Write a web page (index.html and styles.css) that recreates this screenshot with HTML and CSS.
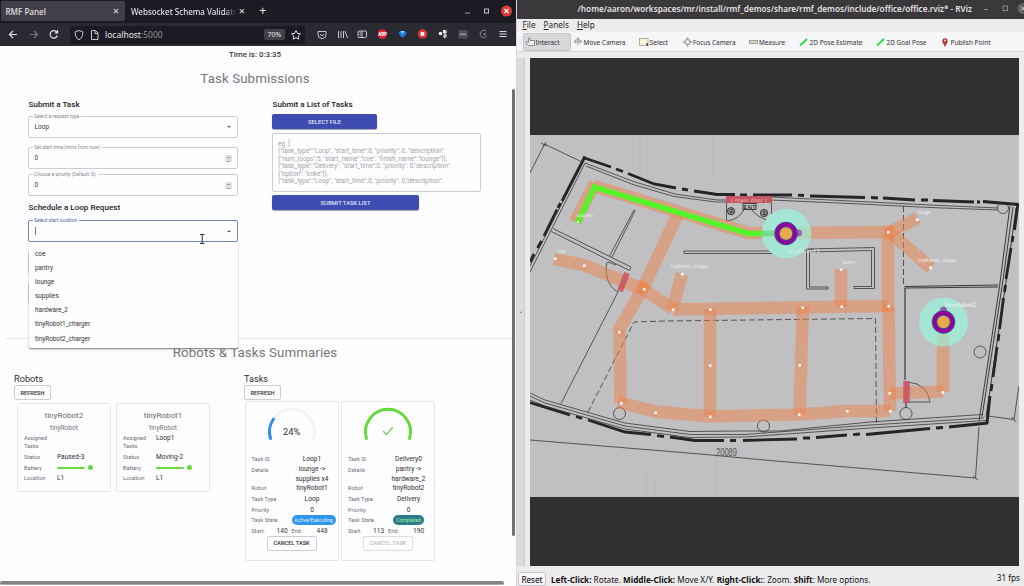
FILE: index.html
```html
<!DOCTYPE html>
<html lang="en">
<head>
<meta charset="utf-8">
<title>RMF Panel</title>
<link rel="stylesheet" href="styles.css">
</head>
<body>
<div class="desktop">
<section class="browser">
  <div class="tabs">
    <div class="tab active"><span>RMF Panel</span><i>×</i></div>
    <div class="tab second"><span class="fade">Websocket Schema Validato</span><i>×</i></div>
    <div class="plus">+</div>
    <svg class="winbtns" width="60" height="22" viewBox="0 0 60 22"><path d="M9 13h5" stroke="#aaa8ae"/><rect x="28.500" y="9" width="4" height="4" fill="none" stroke="#c5c3c8"/><circle cx="50.500" cy="11" r="5.500" fill="#e23b36"/><path d="M48.500 9l4 4m0-4l-4 4" stroke="#fff" stroke-width="1.100"/></svg>
  </div>
  <div class="toolbar">
    <svg class="nav" width="70" height="23" viewBox="0 0 70 23" fill="none" stroke-width="1.200"><path d="M17 11.500H9.500m3.500-3.500L9.500 11.500 13 15" stroke="#e4e2e8"/><path d="M30 11.500h7.500M34 8l3.500 3.500L34 15" stroke="#77757d"/><path d="M57 9.500a3.700 3.700 0 1 0 .3 3M57.500 7v3h-3" stroke="#e4e2e8"/></svg>
    <div class="url">
      <svg width="32" height="18" viewBox="0 0 32 18" fill="none" stroke="#cbc9cf"><path d="M9 4.500l3.800 1.300c.3 3.500-1 6.500-3.800 8-2.800-1.500-4.100-4.500-3.800-8z"/><path d="M21.500 4.500h4l2.500 2.500v6.500h-6.500zM25 4.500v3h3"/></svg>
      <span class="host">localhost</span><span class="port">:5000</span>
      <span class="zoom">70%</span>
      <svg width="14" height="14" viewBox="0 0 14 14" fill="none" stroke="#e4e2e8"><path d="M7 2.500l1.400 2.900 3.100.4-2.300 2.200.6 3.200L7 9.700l-2.800 1.500.6-3.200-2.300-2.200 3.100-.4z"/></svg>
    </div>
    <svg class="exts" width="211" height="23" viewBox="305 23 211 23" fill="none" stroke="#c9c7cd">
      <path d="M318 31.500h8v3a4 4 0 0 1-8 0zM320 34l2 2 2-2"/>
      <path d="M338.500 31v7M341 31v7M343.500 31v7M345 31l2.500 7"/>
      <rect x="358" y="31" width="8.500" height="6.500" rx="1"/><path d="M362 31v6.500M359.500 33h1.500m-1.500 2h1.500"/>
      <path d="M380 29.500h4.500l2 2.200v4.800l-2 2.200H380l-2-2.200v-4.800z" fill="#dd2530" stroke="none"/>
      <text x="378.200" y="36" font-size="4.500" class="abp">ABP</text>
      <path d="M400 31h5l2 2.500-4.500 4.500-4-4.500z" fill="#1c7fe0" stroke="none"/><path d="M401 31h3l-1.500 3z" fill="#b9e0ff" stroke="none"/>
      <circle cx="422.500" cy="34" r="4.700" fill="#dc3437" stroke="none"/><rect x="420.700" y="32.200" width="3.600" height="3.600" fill="#fff" stroke="none"/>
      <circle cx="440.500" cy="33.500" r="1.800" fill="#eee" stroke="none"/><path d="M443 30q4-1 4 2l-1 2 1 2q-1 2.500-3 2.500l-1-2.500 1-2z" fill="#bbb" stroke="none"/><path d="M443 30h2v3h-2z" fill="#fff" stroke="none"/>
      <rect x="458.500" y="30" width="9" height="8.500" fill="#504e58" stroke="none"/><path d="M460 34.200h6" stroke="#ddd" stroke-dasharray="1.500 .7"/>
      <path d="M486 31a3.700 3.700 0 1 0 0 6M486 33l-2.500 1.200 3 1.500" stroke="#8a8890"/>
      <path d="M499.500 31.500h7m-7 2.500h7m-7 2.500h7" stroke="#dddbe0"/>
    </svg>
  </div>
  <div class="page">
    <p class="time">Time is: 0:3:35</p>
    <h1>Task Submissions</h1>
    <div class="forms">
      <div class="col">
        <h2>Submit a Task</h2>
        <div class="field"><label>Select a request type</label><span>Loop</span><b class="caret"></b></div>
        <div class="field f2"><label>Set start time (mins from now)</label><span>0</span><b class="spin"></b></div>
        <div class="field f3"><label>Choose a priority (Default: 0)</label><span>0</span><b class="spin"></b></div>
        <h2 class="loop">Schedule a Loop Request</h2>
        <div class="field focus"><label>Select start location</label><span class="ins"></span><b class="caret up"></b>
          <svg class="ibeam" width="8" height="12" viewBox="0 0 8 12"><path d="M2 1.500h4.500M4.200 1.500v9M2 10.500h4.500" stroke="#333" fill="none"/></svg>
          <ul class="menu"><li>coe</li><li>pantry</li><li>lounge</li><li>supplies</li><li>hardware_2</li><li>tinyRobot1_charger</li><li>tinyRobot2_charger</li></ul>
        </div>
        <div class="field f5"></div>
        <div class="field f6"></div>
      </div>
      <div class="col right">
        <h2>Submit a List of Tasks</h2>
        <div class="btn blue sel">SELECT FILE</div>
        <div class="area">eg. [<br>{"task_type":"Loop", "start_time":0, "priority": 0, "description":<br>{"num_loops":5, "start_name":"coe", "finish_name":"lounge"}},<br>{"task_type":"Delivery", "start_time":0, "priority": 0,"description":<br>{"option": "coke"}},<br>{"task_type":"Loop", "start_time":0, "priority": 0,"description":</div>
        <div class="btn blue sub">SUBMIT TASK LIST</div>
      </div>
    </div>
    <h1 class="summary">Robots &amp; Tasks Summaries</h1>
    <div class="lists">
      <div class="robots">
        <h3>Robots</h3><div class="btn out">REFRESH</div>
        <div class="cards">
          <div class="card robot"><h4>tinyRobot2</h4><h5>tinyRobot</h5>
            <dl><dt>Assigned<br>Tasks</dt><dd></dd><dt>Status</dt><dd>Paused-3</dd><dt>Battery</dt><dd><em></em></dd><dt>Location</dt><dd>L1</dd></dl></div>
          <div class="card robot"><h4>tinyRobot1</h4><h5>tinyRobot</h5>
            <dl><dt>Assigned<br>Tasks</dt><dd>Loop1</dd><dt>Status</dt><dd>Moving-2</dd><dt>Battery</dt><dd><em></em></dd><dt>Location</dt><dd>L1</dd></dl></div>
        </div>
      </div>
      <div class="tasks">
        <h3>Tasks</h3><div class="btn out">REFRESH</div>
        <div class="cards">
          <div class="card task">
            <svg class="gauge" width="92" height="51" viewBox="0 0 92 51" fill="none" stroke-width="3" stroke-linecap="round"><path d="M24.500 35.500A22.500 22.500 0 1 1 67.500 35.500" stroke="#f3f2f5"/><path d="M24.500 35.500A22.500 22.500 0 0 1 27.500 16" stroke="#3091e6"/><text x="45.700" y="32" text-anchor="middle" class="pct">24%</text></svg>
            <dl><dt>Task ID</dt><dd>Loop1</dd><dt>Details</dt><dd class="two">lounge -&gt;<br>supplies x4</dd><dt>Robot</dt><dd>tinyRobot1</dd><dt>Task Type</dt><dd>Loop</dd><dt>Priority</dt><dd>0</dd><dt>Task State</dt><dd><span class="pill">Active/Executing</span></dd></dl>
            <div class="times"><i>Start:</i><b>140</b><i>End:</i><b>448</b></div>
            <div class="btn out cancel">CANCEL TASK</div>
          </div>
          <div class="card task">
            <svg class="gauge" width="92" height="51" viewBox="0 0 92 51" fill="none" stroke-width="3" stroke-linecap="round"><path d="M24.500 35.500A22.500 22.500 0 1 1 67.500 35.500" stroke="#67d93a"/><path d="M41.500 28.500l3 3 6-7" stroke="#7cc85a" stroke-width="1.300"/></svg>
            <dl><dt>Task ID</dt><dd>Delivery0</dd><dt>Details</dt><dd class="two">pantry -&gt;<br>hardware_2</dd><dt>Robot</dt><dd>tinyRobot2</dd><dt>Task Type</dt><dd>Delivery</dd><dt>Priority</dt><dd>0</dd><dt>Task State</dt><dd><span class="pill done">Completed</span></dd></dl>
            <div class="times"><i>Start:</i><b>113</b><i>End:</i><b>190</b></div>
            <div class="btn out cancel off">CANCEL TASK</div>
          </div>
        </div>
      </div>
    </div>
    <div class="vbar"></div>
    <div class="hbar"></div>
  </div>
</section>
<section class="rviz">
  <div class="titlebar"><span>/home/aaron/workspaces/mr/install/rmf_demos/share/rmf_demos/include/office/office.rviz* - RViz</span>
    <svg width="45" height="19" viewBox="0 0 45 19"><path d="M5 9.500h4" stroke="#8d8a8e"/><rect x="24" y="6" width="4.500" height="4.500" fill="none" stroke="#8d8a8e"/><circle cx="44" cy="8.500" r="5.500" fill="#626063"/><path d="M42 6.500l4 4m0-4l-4 4" stroke="#ddd"/></svg></div>
  <div class="menubar"><span><u>F</u>ile</span><span><u>P</u>anels</span><span><u>H</u>elp</span></div>
  <div class="tools">
    <svg width="508" height="33" viewBox="516 19 508 33">
      <rect x="523.500" y="33.500" width="47" height="17" rx="1" fill="#d9d7d9" stroke="#c7c5c7"/>
      <path d="M519 37v10M521 37v10" stroke="#dcdadc" stroke-dasharray="1 1"/>
      <path d="M528.500 45.500l-3-3 1.500-1 1.500 1V38h1.500v2.500h4.500v5z" fill="#eee" stroke="#777" stroke-width=".8"/>
      <path d="M578 38v7M574.500 41.500h7M576.500 39.500l1.500-1.500 1.500 1.500M576 40l-1.500 1.500 1.500 1.500M580 40l1.500 1.500-1.500 1.500" stroke="#aaa" stroke-width="1.300" fill="none"/>
      <rect x="639.500" y="38.500" width="8.500" height="7" fill="#f5f4de" stroke="#b2b09b"/><path d="M646.500 43.500l1.500 1.800" stroke="#222" stroke-width="1.500"/>
      <g fill="none" stroke="#aaa"><circle cx="687.500" cy="42" r="2.500" stroke-width="1.500"/><path d="M682.500 42h3m4 0h3m-5-5v3m0 4v3" stroke-width="1.500"/></g>
      <rect x="749.500" y="40.500" width="8" height="3" fill="#dcd9cc" stroke="#8b8982" stroke-width=".8"/>
      <path d="M800 45.500l7-6.500M877 45.500l7-6.500" stroke="#37d64d" stroke-width="2"/>
      <path d="M945 47l-2.600-5a2.800 2.800 0 1 1 5.200 0z" fill="#b23a2f"/><circle cx="945" cy="40.500" r="1" fill="#eee"/>
      <g class="tooltext"><text x="535.500" y="45" textLength="24" lengthAdjust="spacingAndGlyphs">Interact</text><text x="583.500" y="45" textLength="42" lengthAdjust="spacingAndGlyphs">Move Camera</text><text x="649.500" y="45" textLength="18.500" lengthAdjust="spacingAndGlyphs">Select</text><text x="693" y="45" textLength="42.500" lengthAdjust="spacingAndGlyphs">Focus Camera</text><text x="759" y="45" textLength="26" lengthAdjust="spacingAndGlyphs">Measure</text><text x="809.500" y="45" textLength="53" lengthAdjust="spacingAndGlyphs">2D Pose Estimate</text><text x="886.500" y="45" textLength="40" lengthAdjust="spacingAndGlyphs">2D Goal Pose</text><text x="950.500" y="45" textLength="40" lengthAdjust="spacingAndGlyphs">Publish Point</text></g>
    </svg>
  </div>
  <div class="view">
    <div class="side">●</div>
    <svg class="map" width="489" height="508" viewBox="530 58 489 508" fill="none">
      <rect x="530" y="58" width="490" height="508" fill="#312f32"/>
      <rect x="530" y="135" width="490" height="362" fill="#c0bfc1"/>
      <g stroke="#b8b7b9" stroke-width="1.500" opacity=".6"><path d="M640 136v45M713 136v40M646 470v26M655 480v16M716 455v41"/></g>
      <g stroke="#39383a" stroke-width=".8">
        <path d="M530 173L544.500 144 582 162M530 440L700 454 770 460.500 975 478M979 427L975.500 478M988 416L1014 419.500 1019 386" />
        <path d="M541 143l6 3M543 147l3-5M973 476l5 4M1012 417l4 5"/>
        <path d="M530 272L585 163 635 182 675 194 717 200H726M530 266L583.500 161M586 166L633 184.500 674 196.500 716 202H726"/>
        <path d="M771 197L850 201 930 205 998 208M771 200L850 203.500 930 207.500 998 210"/>
        <path d="M1010 206L999 290 979 421M1013 207L1003 280 982 417M1016 208L1006 282 986 417" stroke-width="1"/>
        <path d="M530 393L545 400 625 423 690 431.500 740 431 780 431 870 422 982 414.500M530 396L545 403 625 426 690 434.500 745 434.500 870 425 984 418M530 400L545 406 625 429 690 437.500 745 437 870 428 986 420.500"/>
        <path d="M551.500 231.500l78 39 1.500-3.500-78-38.500M609.500 256l24.500-46M612 257l23-46M634 209.500l1.500 1.500M607 262c-3 11 1 25 11 30M608 262l8 3M618.500 291L561 403.500"/>
        <path d="M684 251h100M684 253.500h100M684 251v2.500M795 252l19-3"/>
        <path d="M806.500 249L874.500 247.500V288.500H854V286.500H871.500V250.500L809.500 252V287H828V289H806.500Z"/>
        <path d="M904.500 286.500L998 285M904.500 288L998 287M905 288v92M906 402v6" stroke-width="1.200"/>
        <path d="M903.500 206v78M588 412L634 322 665 321 875.500 318.500 876.500 424" stroke-dasharray="6 3"/>
        <circle cx="1003" cy="208" r="5.500"/><circle cx="980" cy="352" r="6"/><circle cx="619.500" cy="413.500" r="6"/><circle cx="763.500" cy="426" r="6"/><circle cx="906" cy="413.500" r="6"/>
        <path d="M908 382q20 2 22 20h-21M726.500 203v18q13-1 19-14M771.500 203v18q-14-2-22-14"/>
      </g>
      <g stroke="#252426" stroke-width="2.800">
        <path d="M585 156.500L562 201M560.500 203l-2.500 5M557 209.500L544 236M541.500 241l-4 7M534 254l-4 8"/>
        <path d="M583 157.500l28 9.500M616 169l7 2.500M628 173.500L654 184l22 4M682 189l6 1M694 191l23 3.500h18M740 195h7M753 195h39M798 195.200l6 .3M810 196l55 1.500M871 197.500l7 .5M883 198l32 2M921 200h7M933 200.500l41 1.500M977 202h3M983 201.500l35 3"/>
        <path d="M1018 203l-3.500 27M1013 236l-1 6M1011 248l-5 31M1005.500 285l-1 7M1003.500 298l-4 31M999 334l-1 7M997 347l-4 30M992 384l-1 7M990 396l-3 27.500"/>
        <path d="M988 423l-39 4M943 427.500l-7 .5M930 428.500l-64 6M860 434l-7 .7M847 435l-31 2.500M810 438h-7M797 439l-54 1.500M736 440.500h-6M724 440.500h-29l-25-3.500M664 436.500l-7-.8M651 434.500l-26-2.500-37-12M582 418.500l-6-2M570 415l-40-12.500"/>
      </g>
      <g class="lanes">
        <path d="M575 222L595 183"/><path d="M594 186L748 233 786 233"/><path d="M786 233L894 232"/><path d="M886 234L918 218"/><path d="M886 229L931 268"/><path d="M888 236V312"/><path d="M888.500 306L890 411"/><path d="M673 309.500L888 306"/><path d="M841 269V307"/><path d="M672 310L682 274"/><path d="M554 259L584 265 645 290"/><path d="M640 287L673 309"/><path d="M678 214L642 290"/><path d="M646 283L617 333"/><path d="M619.500 331L620.500 403"/><path d="M618 402L655 411.500 710 416.500 800 414.500 847 411H890"/><path d="M710 309V417"/><path d="M803 306L799.500 415"/><path d="M890 393.500L943 391.500"/><path d="M943 322V392"/>
      </g>
      <path d="M577.500 223L594.500 187 748 233.500H764" stroke="#54f428" stroke-width="5.500"/>
      <g fill="#fff"><path d="M577 221h2v2h-2zM554 257.500h2.500v2.500H554zM583 264.500h2.500v2.500H583zM643 288h2.500v2.500H643zM672 308.500h2.500v2.500H672zM681 273h2.500v2.500H681zM709 308.500h2.500v2.500H709zM709 364.500h2.500v2.500H709zM709 415.500h2.500v2.500H709zM618 331h2.500v2.500H618zM620 402h2.500v2.500H620zM654.500 411.500h2.500v2.500h-2.500zM801.500 306.500h2.500v2.500h-2.500zM798.500 364h2.500v2.500h-2.500zM798 413.500h2.500v2.500H798zM846 410h2.500v2.500H846zM889 410h2.500v2.500H889zM888.500 392h2.500v2.500h-2.500zM941.500 391h2.500v2.500h-2.500zM840 268.500h2.500v2.500H840zM840.500 305.500h2.500v2.500h-2.500zM887.500 305h2.500v2.500h-2.500zM887 231h2.500v2.500H887zM916 218.500h2.500v2.500H916zM929.500 266.500h2.500v2.500h-2.500z"/></g>
      <path d="M627 273l-7 18" stroke="#c85462" stroke-width="6" opacity=".9"/><path d="M906.500 381v22" stroke="#c85462" stroke-width="6.500" opacity=".9"/>
      <rect x="726" y="196" width="46" height="7" fill="#c95462"/>
      <g stroke="#39383a"><circle cx="731" cy="211.200" r="3.600" fill="#8a898b"/><circle cx="764" cy="213" r="3.600" fill="#8a898b"/><rect x="743" y="203.500" width="13" height="6"/></g>
      <g class="labels"><text x="731" y="201.500" fill="#e9c9b8" textLength="36">/ main door /</text><text x="743.500" y="208.800" class="dark" textLength="12">EXIT</text><text x="729.400" y="213.200" class="dark">2</text><text x="762.500" y="215" class="dark">1</text>
      <text x="577" y="217" textLength="16" lengthAdjust="spacingAndGlyphs">supplies</text><text x="558" y="253" textLength="8">coe</text><text x="670" y="268" textLength="38" lengthAdjust="spacingAndGlyphs">tinyRobot1_charger</text><text x="917.500" y="214" textLength="13" lengthAdjust="spacingAndGlyphs">lounge</text><text x="842" y="263.500" textLength="13" lengthAdjust="spacingAndGlyphs">pantry</text><text x="918" y="261.500" textLength="39" lengthAdjust="spacingAndGlyphs">tinyRobot2_charger</text></g>
      <g stroke="none"><circle cx="786.500" cy="233.500" r="24.700" fill="#a4e5d4"/><circle cx="943.500" cy="322" r="24.500" fill="#a4e5d4"/></g>
      <path d="M762 233.500h13" stroke="#79da94" stroke-width="6"/><path d="M799 233.500h12M943 334v12" stroke="#b1d7ba" stroke-width="12"/>
      <circle cx="798.500" cy="233" r="3.500" fill="#9662b8"/><circle cx="943.500" cy="310" r="3.500" fill="#9662b8"/>
      <g fill="#eaaa4c" stroke="#424f93" stroke-width="5.500"><circle cx="786" cy="233.500" r="9"/><circle cx="943.500" cy="322" r="9"/></g><g stroke="#95009c" stroke-width="3.400"><circle cx="786" cy="233.500" r="9"/><circle cx="943.500" cy="322" r="9"/></g>
      <g class="labels big"><text x="787" y="252.500" textLength="33" opacity=".65">tinyRobot1</text><text x="945" y="306.500" textLength="32">tinyRobot2</text></g>
      <text x="716" y="456" class="dim" textLength="21" lengthAdjust="spacingAndGlyphs">20089</text>
    </svg>
  </div>
  <div class="status"><button>Reset</button><span class="hint"><b>Left-Click:</b> Rotate. <b>Middle-Click:</b> Move X/Y. <b>Right-Click:</b>: Zoom. <b>Shift</b>: More options.</span><span class="fps">31 fps</span></div>
</section>
</div>
</body>
</html>
```
FILE: styles.css
```css
* { box-sizing: border-box; margin: 0; padding: 0; }
body { width: 1024px; height: 586px; overflow: hidden; background: #fff; }
svg { display: block; flex: none; }
i { font-style: normal; }
.desktop { display: flex; width: 1024px; height: 586px; }
.browser { width: 516px; height: 586px; display: flex; flex-direction: column; background: #fefdff; font-family: Roboto, sans-serif; overflow: hidden; }

/* browser chrome */
.tabs { height: 23px; background: #1c1a22; display: flex; align-items: flex-start; font: 500 8.1px "Noto Sans", sans-serif; color: #e2e0e6; }
.tab { height: 20px; margin-top: 1px; display: flex; align-items: center; justify-content: space-between; white-space: nowrap; }
.tab.active { width: 124px; margin-left: 1px; padding: 0 6px 0 4.5px; background: #423f48; border-radius: 2px; }
.tab.second { width: 114px; margin-left: 6px; }
.tab i { font-size: 11px; font-weight: 400; line-height: 18px; }
.fade { width: 106px; overflow: hidden; font-size: 8px; -webkit-mask-image: linear-gradient(90deg, #000 88%, transparent); mask-image: linear-gradient(90deg, #000 88%, transparent); }
.plus { margin-left: 14px; font-size: 13px; font-weight: 400; line-height: 21px; width: 10px; }
.winbtns { margin-left: auto; width: 60px; }
.toolbar { height: 23px; background: #2b2932; display: flex; align-items: center; }
.url { width: 235px; height: 18px; display: flex; align-items: center; background: #1c1a22; border-radius: 2px; font: 8.5px "Noto Sans", sans-serif; color: #e6e4ea; }
.url .port { color: #96949b; }
.host { margin-left: 3px; }
.zoom { margin-left: auto; margin-right: 4px; width: 21px; height: 11px; background: #43414b; border-radius: 2px; font-size: 7px; line-height: 11px; text-align: center; }
.url svg:last-child { margin-right: 2px; }
.abp { font-family: Roboto, sans-serif; font-weight: 700; fill: #fff; stroke: none; }

/* page */
.page { position: relative; height: 540px; color: #3a393d; }
.time { height: 16px; margin-right: 6px; text-align: center; font-size: 7.9px; font-weight: 500; line-height: 17px; }
h1 { font-size: 13.3px; font-weight: 400; color: #77767a; text-align: center; height: 32px; line-height: 33px; margin-right: 6px; letter-spacing: .1px; }
.forms { display: flex; height: 244px; padding-left: 28px; gap: 34px; margin-right: 6px; }
.col { width: 210px; }
h2 { font-size: 8.1px; font-weight: 500; color: #252428; line-height: 21px; height: 22px; padding-left: .5px; }
.field { position: relative; height: 22px; border: 1px solid #cdccd1; border-radius: 2px; font-size: 6.500px; padding: 0 5px 0 5.500px; display: flex; align-items: center; justify-content: space-between; }
.field label { position: absolute; top: -3px; left: 4px; padding: 0 2px 0 1px; background: #fefdff; font-size: 4.850px; line-height: 6px; color: #89888c; }
.f2 { margin-top: 9px; }
.f3 { margin-top: 5px; }
h2.loop { margin-top: 2px; height: 22px; line-height: 19px; }
.focus { border-color: #7585ba; }
.focus label { color: #5262a8; }
.ins { width: 1px; height: 8px; background: #777; margin-left: 0; }
.caret { border: 2px solid transparent; border-top-color: #666; border-bottom: 0; margin-right: 1px; }
.caret.up { border-top: 0; border-bottom: 2px solid #666; }
.spin { width: 7px; height: 7px; background: #e0dfe2; border: 1px solid #e0dfe2; display: flex; }
.spin::before { content: ""; margin: 1px auto; width: 3px; height: 3px; border: solid #999; border-width: 1px 0; }
.ibeam { position: absolute; left: 169px; top: 12px; z-index: 4; }
.menu { position: absolute; z-index: 3; left: 0; top: 21px; width: 209px; height: 106px; list-style: none; background: #fefdff; padding: 5px 6px; border-radius: 0 0 2px 2px; box-shadow: 0 1px 1px #888, 0 2px 3px rgba(0,0,0,.12); }
.menu li { font-size: 6.400px; line-height: 14.100px; height: 14.100px; color: #333; }
.f5 { margin-top: 10px; }
.f6 { margin-top: 8px; }
.btn { display: flex; align-items: center; justify-content: center; font-size: 5.800px; font-weight: 500; border-radius: 2px; }
.blue { background: #3f4cb2; color: #e1e3f7; height: 15px; box-shadow: 0 1px 1px rgba(0,0,0,.35); }
.right h2 { height: 20px; }
.sel { width: 105px; }
.sub { width: 147px; }
.area { width: 209px; height: 59px; margin: 4px 0 3px; border: 1px solid #cdccd1; border-radius: 2px; padding: 7px 5px; font-size: 6.400px; line-height: 7.450px; color: #a3a2a6; white-space: nowrap; }
h1.summary { border-top: 1px solid #e6e5e9; height: 34px; line-height: 28px; margin: 0 0 0 6px; padding-right: 12px; }
.lists { display: flex; gap: 34px; padding-left: 14px; }
.robots { width: 196px; }
h3 { font-size: 9.200px; font-weight: 400; line-height: 13px; height: 13px; color: #2e2d31; }
.out { border: 1px solid #cdccd1; width: 37px; height: 15px; font-size: 5.600px; color: #2b2a2e; }
.cards { display: flex; }
.robots .cards { margin: 3px 0 0 3px; gap: 5px; }
.tasks .cards { margin: 1px 0 0 .5px; gap: 2.500px; }
.card { width: 94px; border: 1px solid #e6e5e9; border-radius: 2px; }
.robot { height: 89px; padding: 5px 6px; }
h4 { font-size: 8px; font-weight: 400; text-align: center; line-height: 13px; color: #66656a; }
h5 { font-size: 6.600px; font-weight: 400; text-align: center; line-height: 12px; color: #77767b; }
dt, .times i { font-size: 5.400px; color: #68676c; letter-spacing: .1px; }
dd { font-size: 6.600px; color: #2e2d31; }
dl { display: grid; }
.robot dl { grid-template-columns: 33px 1fr; grid-template-rows: 18px 11px 10px 10px; line-height: 8.200px; }
.robot dt:not(:first-child), .robot dd:not(:nth-child(2)) { align-self: center; }
.robot dl em { display: block; position: relative; width: 28px; height: 2.500px; background: #67d93a; border-radius: 1px; }
.robot em::after { content: ""; position: absolute; left: 30.500px; top: -1.300px; width: 5px; height: 5px; border-radius: 50%; background: #67d93a; }
.task { height: 160px; padding-top: 1px; }
.pct { font: 9.300px Roboto, sans-serif; fill: #333; }
.task dl { grid-template-columns: 39px 43px; padding-left: 6px; grid-template-rows: 10.700px 18.800px 10.700px 10.500px 10.500px 10.600px; line-height: 10.700px; }
.task dd { text-align: center; }
.task .two { line-height: 9.500px; padding-top: .7px; white-space: nowrap; }
.pill { display: block; width: 44px; height: 10px; margin-left: 1px; border-radius: 5px; background: #3295ed; color: #dff0ff; font-size: 5.100px; line-height: 10px; white-space: nowrap; }
.pill.done { width: 31px; margin-left: 6px; background: #2c7b8b; color: #a5ed9e; }
.times { display: flex; align-items: center; padding-left: 6px; height: 10px; }
.times i { width: 20px; }
.times b { width: 20px; font-weight: 400; font-size: 6.600px; padding-left: 5px; }
.cancel { width: 50px; margin: 0 auto; height: 15px; }
.off { color: #bcbbbf; border-color: #dddce0; }
.vbar { position: absolute; right: 1px; top: 43px; width: 3px; height: 447px; background: #727074; border-radius: 2px; }
.hbar { position: absolute; left: 0; bottom: 1px; width: 504px; height: 4px; background: #858387; border-bottom: 1px solid #aaa; border-radius: 2px; }

/* robot visualiser */
.rviz { width: 508px; height: 586px; background: #edebee; display: flex; flex-direction: column; overflow: hidden; font-family: "Noto Sans", sans-serif; border-left: 1px solid #d5d3d7; color: #302f32; }
.titlebar { height: 19px; flex: none; background: #3b383b; color: #e2e0e3; display: flex; justify-content: flex-end; font-size: 8.180px; font-weight: 600; line-height: 18px; white-space: nowrap; }
.titlebar span { margin-right: 7px; }
.menubar { height: 13px; flex: none; display: flex; gap: 8px; padding-left: 5.500px; font-size: 8.200px; line-height: 12px; color: #222; background: #edebee; }
.tools { height: 20px; flex: none; overflow: hidden; background: #f6f5f7; border-bottom: 1px solid #d9d7da; }
.tools svg { margin: -13px 0 0 -1px; }
.tooltext { font: 7.800px "Noto Sans", sans-serif; fill: #302f32; }
.view { height: 514px; flex: none; display: flex; padding-top: 6px; }
.side { width: 8px; margin-right: 5px; border-right: 1px solid #cbc9cd; background: #dcdadd; display: flex; align-items: center; font-size: 3px; padding-left: 3px; }
.lanes { stroke: #ee834c; stroke-opacity: .5; stroke-width: 12.500px; }
.labels { font: 5px "DejaVu Sans", sans-serif; fill: #f5f4f5; }
.labels .dark { fill: #111; font-size: 5.500px; }
.big { font-size: 6px; }
.dim { font: 10px "Liberation Sans", sans-serif; fill: #555; }
.status { height: 20px; display: flex; align-items: center; padding-top: 6px; font-size: 8.180px; color: #111; white-space: nowrap; }
.status button { width: 28px; height: 14px; margin: 0 5px 0 1px; border: 1px solid #c6c4c8; background: #f7f6f8; border-radius: 2px; font: inherit; line-height: 11px; }
.fps { margin: 0 4px 4px auto; }
```
